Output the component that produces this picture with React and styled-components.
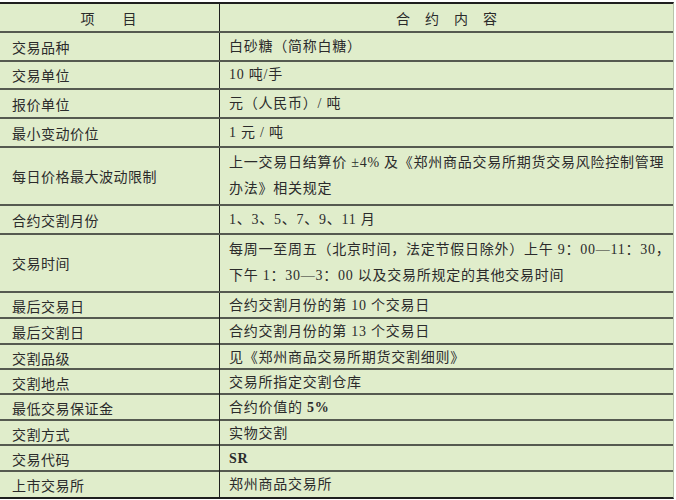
import React from 'react'
import styled, { createGlobalStyle } from 'styled-components'

const GlobalStyle = createGlobalStyle`
  html, body {
    margin: 0;
    padding: 0;
    background: #ffffff;
  }
  body {
    font-family: "Liberation Serif", "Noto Sans CJK SC", serif;
    color: #2b2b2b;
  }
`

const rows = [
  { label: '交易品种', value: ['白砂糖（简称白糖）'], h: 29 },
  { label: '交易单位', value: ['10 吨/手'], h: 28 },
  { label: '报价单位', value: ['元（人民币）/ 吨'], h: 29 },
  { label: '最小变动价位', value: ['1 元 / 吨'], h: 29 },
  {
    label: '每日价格最大波动限制',
    value: ['上一交易日结算价 ±4% 及《郑州商品交易所期货交易风险控制管理', '办法》相关规定'],
    h: 58,
  },
  { label: '合约交割月份', value: ['1、3、5、7、9、11 月'], h: 29 },
  {
    label: '交易时间',
    value: ['每周一至周五（北京时间，法定节假日除外）上午 9：00—11：30，', '下午 1：30—3：00 以及交易所规定的其他交易时间'],
    h: 58,
  },
  { label: '最后交易日', value: ['合约交割月份的第 10 个交易日'], h: 26 },
  { label: '最后交割日', value: ['合约交割月份的第 13 个交易日'], h: 26 },
  { label: '交割品级', value: ['见《郑州商品交易所期货交割细则》'], h: 25 },
  { label: '交割地点', value: ['交易所指定交割仓库'], h: 25 },
  { label: '最低交易保证金', value: ['合约价值的 ', <b key="b">5%</b>], h: 26, inline: true },
  { label: '交割方式', value: ['实物交割'], h: 25 },
  { label: '交易代码', value: [<b key="sr">SR</b>], h: 26, inline: true },
  { label: '上市交易所', value: ['郑州商品交易所'], h: 25, last: true },
]

export default function App() {
  return (
    <>
      <GlobalStyle />
      <Table>
        <Row h={29}>
          <HeadCell gap={28}>
            <span>项</span>
            <span>目</span>
          </HeadCell>
          <HeadCell gap={15} right>
            <span>合</span>
            <span>约</span>
            <span>内</span>
            <span>容</span>
          </HeadCell>
        </Row>
        {rows.map((r) => (
          <Row key={r.label} h={r.h} last={r.last}>
            <LabelCell>{r.label}</LabelCell>
            <ValueCell>
              {r.inline ? (
                <Line>{r.value}</Line>
              ) : (
                r.value.map((v, i) => <Line key={i}>{v}</Line>)
              )}
            </ValueCell>
          </Row>
        ))}
      </Table>
    </>
  )
}

const Table = styled.div`
  margin-top: 2px;
  width: 673px;
  background: #e0edcb;
  border-top: 2px solid #1f1f1f;
  border-bottom: 2px solid #1f1f1f;
  border-right: 1px solid #b9c4aa;
  font-size: 14px;
`

const Row = styled.div`
  display: grid;
  grid-template-columns: 219px 1fr;
  height: ${(p) => p.h - (p.last ? 0 : 2)}px;
  border-bottom: ${(p) => (p.last ? 'none' : '2px solid #555a50')};
`

const HeadCell = styled.div`
  display: flex;
  align-items: center;
  justify-content: center;
  gap: ${(p) => p.gap}px;
  border-left: ${(p) => (p.right ? '1px solid #1f1f1f' : 'none')};
  padding-right: ${(p) => (p.right ? '0' : '2px')};
`

const LabelCell = styled.div`
  display: flex;
  align-items: center;
  padding-left: 12px;
  letter-spacing: 0.5px;
  white-space: nowrap;
`

const ValueCell = styled.div`
  display: flex;
  flex-direction: column;
  justify-content: center;
  padding-left: 9px;
  border-left: 1px solid #1f1f1f;
  letter-spacing: 0.75px;
  white-space: nowrap;
`

const Line = styled.div`
  line-height: 26px;
  b {
    font-weight: bold;
  }
`
